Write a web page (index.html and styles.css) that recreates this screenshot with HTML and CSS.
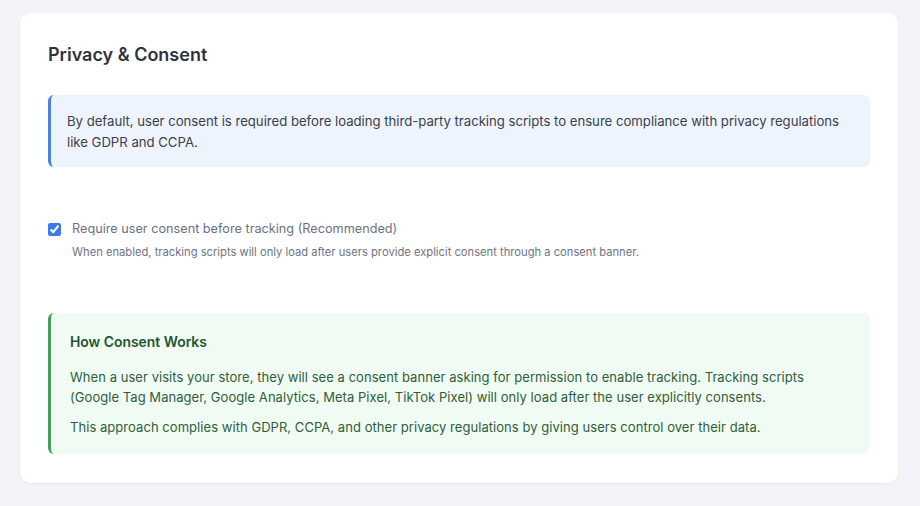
FILE: index.html
```html
<!DOCTYPE html>
<html lang="en">
<head>
<meta charset="utf-8">
<title>Privacy &amp; Consent</title>
<link rel="stylesheet" href="styles.css">
</head>
<body>
<main class="page">
  <section class="card">
    <h2 class="card-title">Privacy &amp; Consent</h2>
    <div class="notice notice-info">
      <p>By default, user consent is required before loading third-party tracking scripts to ensure compliance with privacy regulations like GDPR and CCPA.</p>
    </div>
    <div class="field">
      <label class="check-row">
        <input type="checkbox" class="check" checked>
        <span class="check-label">Require user consent before tracking (Recommended)</span>
      </label>
      <p class="field-help">When enabled, tracking scripts will only load after users provide explicit consent through a consent banner.</p>
    </div>
    <div class="notice notice-success">
      <h3 class="notice-title">How Consent Works</h3>
      <p>When a user visits your store, they will see a consent banner asking for permission to enable tracking. Tracking scripts (Google Tag Manager, Google Analytics, Meta Pixel, TikTok Pixel) will only load after the user explicitly consents.</p>
      <p>This approach complies with GDPR, CCPA, and other privacy regulations by giving users control over their data.</p>
    </div>
  </section>
</main>
</body>
</html>
```
FILE: styles.css
```css
* { box-sizing: border-box; }
html, body { margin: 0; padding: 0; }
body {
  background: #f3f4f9;
  font-family: Inter, "Noto Sans", "Liberation Sans", sans-serif;
  color: #3b3f4e;
}
.page {
  padding: 13px 22px 23px 20px;
}
.card {
  background: #ffffff;
  border-radius: 10px;
  box-shadow: 0 1px 3px rgba(30, 40, 80, 0.06);
  padding: 29px 28px 29px 28px;
}
.card-title {
  margin: 0 0 27px 0;
  font-size: 18px;
  line-height: 26px;
  font-weight: 600;
  color: #30323f;
}
.notice {
  border-radius: 6px;
}
.notice p { margin: 0; }
.notice-info {
  background: #eef4fd;
  border-left: 3px solid #4a80e6;
  padding: 16px 12px 14px 16px;
  font-size: 13.2px;
  letter-spacing: -0.03px;
  line-height: 21px;
  color: #3b3f4e;
}
.field {
  margin: 52px 0 52px 0;
}
.check-row {
  display: flex;
  align-items: center;
  gap: 11px;
}
.check {
  margin: 0;
  width: 13px;
  height: 13px;
  accent-color: #3b7ae8;
}
.check-label {
  font-size: 12.7px;
  line-height: 20px;
  color: #6b7084;
}
.field-help {
  margin: 4px 0 0 24px;
  font-size: 11.2px;
  line-height: 18px;
  color: #6f7385;
}
.notice-success {
  background: #f0fbf3;
  border-left: 3px solid #45a05a;
  padding: 18px 19px 17px 19px;
  color: #2f5e3b;
  font-size: 13px;
  letter-spacing: 0.05px;
  line-height: 20px;
}
.notice-title {
  margin: 0 0 14px 0;
  font-size: 13.9px;
  letter-spacing: 0;
  line-height: 22px;
  font-weight: 600;
  color: #24542f;
}
.notice-success p + p {
  margin-top: 10px;
}
```
